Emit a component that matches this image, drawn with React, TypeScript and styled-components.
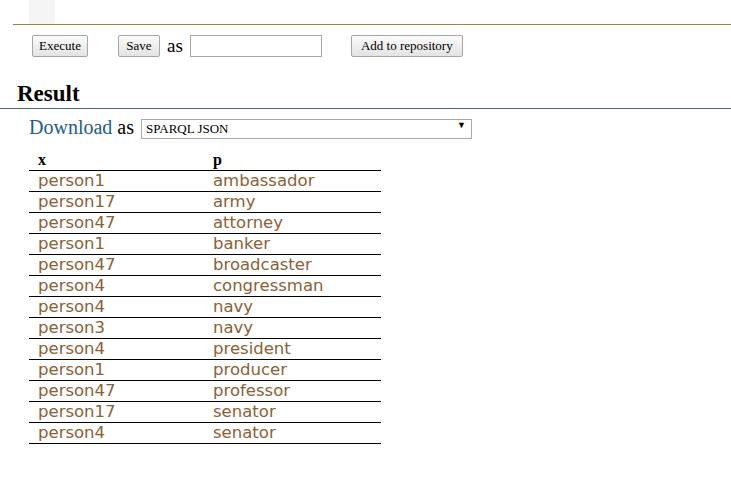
import * as React from "react";
import styled, { createGlobalStyle } from "styled-components";

const GlobalStyle = createGlobalStyle`
  html, body {
    margin: 0;
    padding: 0;
    background: #ffffff;
    font-family: "Liberation Serif", "Times New Roman", serif;
    color: #000;
  }
`;

const rows: [string, string][] = [
  ["person1", "ambassador"],
  ["person17", "army"],
  ["person47", "attorney"],
  ["person1", "banker"],
  ["person47", "broadcaster"],
  ["person4", "congressman"],
  ["person4", "navy"],
  ["person3", "navy"],
  ["person4", "president"],
  ["person1", "producer"],
  ["person47", "professor"],
  ["person17", "senator"],
  ["person4", "senator"],
];

const EditorStrip = styled.div`
  height: 24px;
  margin-left: 13px;
  border-bottom: 1px solid #a0814d;
  display: flex;
  padding-left: 16px;
`;

const Gutter = styled.div`
  width: 26px;
  background: #f5f5f5;
`;

const Toolbar = styled.div`
  display: flex;
  align-items: center;
  height: 22px;
  margin-top: 10px;
  padding-left: 32px;
`;

const Button = styled.button<{ $gap?: number; $width: number }>`
  box-sizing: border-box;
  width: ${(p) => p.$width}px;
  height: 22px;
  padding: 0;
  margin-left: ${(p) => p.$gap ?? 0}px;
  font-family: "Liberation Serif", "Times New Roman", serif;
  font-size: 13px;
  color: #000;
  background: linear-gradient(#fbfbfb, #e3e3e3);
  border: 1px solid #a6a6a6;
  border-radius: 2px;
`;

const AsLabel = styled.span`
  font-size: 19px;
  margin: 0 7px;
  line-height: 22px;
`;

const NameInput = styled.input`
  box-sizing: border-box;
  width: 132px;
  height: 22px;
  border: 1px solid #a9a9a9;
  padding: 0 3px;
`;

const Heading = styled.h2`
  margin: 24px 0 0;
  padding: 0 0 1px 17px;
  font-size: 23px;
  line-height: 26px;
  font-weight: bold;
  border-bottom: 1px solid #4b6a78;
`;

const DownloadRow = styled.div`
  display: flex;
  align-items: center;
  margin-top: 8px;
  padding-left: 29px;
  height: 20px;
  font-size: 20px;
`;

const DownloadLink = styled.a`
  color: #235c8e;
  text-decoration: none;
`;

const SelectWrap = styled.div`
  position: relative;
  margin-left: 7px;
`;

const FormatSelect = styled.select`
  appearance: none;
  box-sizing: border-box;
  width: 331px;
  height: 20px;
  border: 1px solid #a9a9a9;
  border-radius: 0;
  background: #fff;
  padding: 0 4px;
  font-family: "Liberation Serif", "Times New Roman", serif;
  font-size: 13px;
  color: #000;
`;

const Arrow = styled.span`
  position: absolute;
  right: 6px;
  top: 5px;
  font-size: 9px;
  line-height: 10px;
  pointer-events: none;
`;

const ResultTable = styled.table`
  margin: 12px 0 0 29px;
  width: 352px;
  border-collapse: collapse;
  table-layout: fixed;
`;

const HeadCell = styled.th<{ $width?: number }>`
  width: ${(p) => (p.$width ? `${p.$width}px` : "auto")};
  text-align: left;
  padding: 0 0 0 9px;
  height: 21px;
  font-size: 16px;
  font-weight: bold;
  border-bottom: 1px solid #000;
`;

const Cell = styled.td`
  padding: 0 0 0 9px;
  height: 20px;
  line-height: 20px;
  font-family: "DejaVu Sans", Verdana, sans-serif;
  font-size: 16.5px;
  color: #8d6035;
  border-bottom: 1px solid #000;
  white-space: nowrap;
`;

export default function App() {
  return (
    <>
      <GlobalStyle />
      <EditorStrip>
        <Gutter />
      </EditorStrip>
      <Toolbar>
        <Button $width={56}>Execute</Button>
        <Button $gap={30} $width={42}>
          Save
        </Button>
        <AsLabel>as</AsLabel>
        <NameInput />
        <Button $gap={29} $width={112}>
          Add to repository
        </Button>
      </Toolbar>
      <Heading>Result</Heading>
      <DownloadRow>
        <DownloadLink href="#">Download</DownloadLink>
        <span>&nbsp;as</span>
        <SelectWrap>
          <FormatSelect defaultValue="json">
            <option value="json">SPARQL JSON</option>
          </FormatSelect>
          <Arrow>▼</Arrow>
        </SelectWrap>
      </DownloadRow>
      <ResultTable>
        <thead>
          <tr>
            <HeadCell $width={166}>x</HeadCell>
            <HeadCell>p</HeadCell>
          </tr>
        </thead>
        <tbody>
          {rows.map(([x, p], i) => (
            <tr key={i}>
              <Cell>{x}</Cell>
              <Cell>{p}</Cell>
            </tr>
          ))}
        </tbody>
      </ResultTable>
    </>
  );
}
